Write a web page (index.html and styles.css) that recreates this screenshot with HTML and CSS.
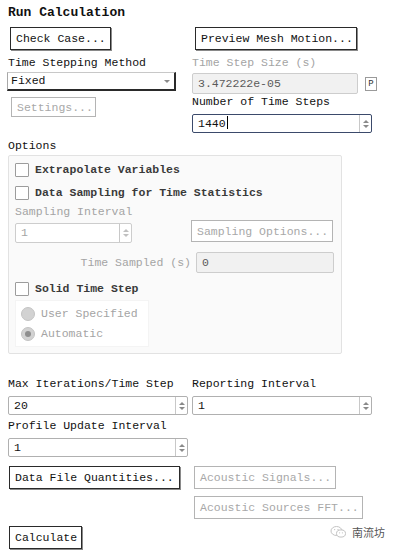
FILE: index.html
```html
<!DOCTYPE html>
<html lang="en">
<head>
    <meta charset="UTF-8">
    <meta name="viewport" content="width=device-width, initial-scale=1.0">
    <title>Run Calculation</title>
    <link rel="stylesheet" href="styles.css">
</head>
<body>
    <div class="panel">
        <h1 class="title">Run Calculation</h1>

        <div class="top">
            <div class="col">
                <button type="button" class="btn btn-check">Check Case...</button>
                <label class="lbl">Time Stepping Method</label>
                <div class="select">
                    <span>Fixed</span>
                    <span class="select-arrow"></span>
                </div>
                <button type="button" class="btn btn-off btn-settings">Settings...</button>
            </div>
            <div class="col">
                <button type="button" class="btn btn-preview">Preview Mesh Motion...</button>
                <label class="lbl lbl-off">Time Step Size (s)</label>
                <div class="step-row">
                    <div class="field field-off field-step">3.472222e-05</div>
                    <span class="p-btn">P</span>
                </div>
                <label class="lbl lbl-steps">Number of Time Steps</label>
                <div class="field field-focus field-count">
                    <span>1440<span class="caret"></span></span>
                    <span class="spin"><i class="up"></i><i class="down"></i></span>
                </div>
            </div>
        </div>

        <div class="lbl lbl-options">Options</div>
        <div class="options">
            <div class="check-row"><span class="check"></span>Extrapolate Variables</div>
            <div class="check-row"><span class="check"></span>Data Sampling for Time Statistics</div>
            <div class="lbl lbl-off">Sampling Interval</div>
            <div class="sampling-row">
                <div class="field field-off field-interval">
                    <span>1</span>
                    <span class="spin"><i class="up"></i><i class="down"></i></span>
                </div>
                <button type="button" class="btn btn-off btn-sampling">Sampling Options...</button>
            </div>
            <div class="sampled-row">
                <span class="lbl-off sampled-label">Time Sampled (s)</span>
                <div class="field field-off field-sampled">0</div>
            </div>
            <div class="check-row check-solid"><span class="check"></span>Solid Time Step</div>
            <div class="radio-box">
                <div class="radio-row"><span class="radio"></span>User Specified</div>
                <div class="radio-row"><span class="radio radio-on"></span>Automatic</div>
            </div>
        </div>

        <div class="bottom">
            <label class="lbl">Max Iterations/Time Step</label>
            <label class="lbl">Reporting Interval</label>
            <div class="field field-num">
                <span>20</span>
                <span class="spin"><i class="up"></i><i class="down"></i></span>
            </div>
            <div class="field field-num">
                <span>1</span>
                <span class="spin"><i class="up"></i><i class="down"></i></span>
            </div>
            <label class="lbl lbl-profile">Profile Update Interval</label>
            <div></div>
            <div class="field field-num field-profile">
                <span>1</span>
                <span class="spin"><i class="up"></i><i class="down"></i></span>
            </div>
        </div>

        <div class="actions">
            <div class="col">
                <button type="button" class="btn btn-data">Data File Quantities...</button>
            </div>
            <div class="col">
                <button type="button" class="btn btn-off btn-signals">Acoustic Signals...</button>
                <button type="button" class="btn btn-off btn-fft">Acoustic Sources FFT...</button>
            </div>
        </div>

        <button type="button" class="btn btn-calc">Calculate</button>
    </div>

    <div class="watermark">
        <svg width="17" height="14" viewBox="0 0 17 14">
            <ellipse cx="6.5" cy="6" rx="5.5" ry="4.5" fill="none" stroke="#c4c4c4" stroke-width="1"/>
            <ellipse cx="11" cy="8.5" rx="4.5" ry="3.6" fill="#fff" stroke="#c4c4c4" stroke-width="1"/>
            <circle cx="4.6" cy="4.6" r="0.7" fill="#c4c4c4"/>
            <circle cx="8" cy="4.6" r="0.7" fill="#c4c4c4"/>
            <circle cx="9.6" cy="7.8" r="0.6" fill="#c4c4c4"/>
            <circle cx="12.4" cy="7.8" r="0.6" fill="#c4c4c4"/>
        </svg>
        <span>南流坊</span>
    </div>
</body>
</html>
```

FILE: styles.css
```css
body {
    margin: 0;
    background-color: #ffffff;
    color: #111111;
    font-family: "Liberation Mono", "DejaVu Sans Mono", monospace;
    font-size: 11.5px;
    line-height: 14px;
}
button {
    font-family: "Liberation Mono", "DejaVu Sans Mono", monospace;
    font-size: 11.5px;
}
.panel {
    position: relative;
    width: 377px;
    height: 552px;
    padding: 5px 0 0 8px;
    box-sizing: border-box;
}
.title {
    margin: 0;
    font-size: 13px;
    line-height: 15px;
    font-weight: bold;
}

/* buttons */
.btn {
    display: block;
    height: 23px;
    padding: 0 5px;
    background-color: #ffffff;
    color: #111111;
    border: 1px solid #2a2a2a;
    box-shadow: 1px 1px 0 #8a8a8a;
    text-align: left;
    white-space: nowrap;
}
.btn-off {
    color: #a8a8a8;
    border-color: #b4b4b4;
    box-shadow: none;
}
.btn-check {
    width: 101px;
    margin-left: 2px;
}
.btn-preview {
    width: 162px;
    margin-left: 3px;
}
.btn-settings {
    width: 85px;
    height: 20px;
    margin: 6px 0 0 3px;
}

/* labels */
.lbl {
    display: block;
    margin-top: 6px;
}
.lbl-off {
    color: #a4a4a4;
}

.top {
    display: grid;
    grid-template-columns: 184px 186px;
    margin-top: 7px;
}
.col {
    display: flex;
    flex-direction: column;
    align-items: flex-start;
}

/* dropdown */
.select {
    display: flex;
    justify-content: space-between;
    align-items: center;
    width: 169px;
    height: 19px;
    margin: 2px 0 0 -1px;
    padding: 0 4px 0 3px;
    box-sizing: border-box;
    border-top: 1px solid #c8c8c8;
    border-left: 1px solid #a8a8a8;
    border-right: 2px solid #2a2a2a;
    border-bottom: 2px solid #2a2a2a;
}
.select-arrow {
    width: 0;
    height: 0;
    border-left: 3px solid transparent;
    border-right: 3px solid transparent;
    border-top: 3px solid #8a8a8a;
}

/* text fields */
.field {
    display: flex;
    justify-content: space-between;
    align-items: center;
    height: 19px;
    padding-left: 5px;
    box-sizing: border-box;
    background-color: #ffffff;
    border: 1px solid #b0b0b0;
    border-radius: 2px;
}
.field-off {
    background-color: #f1f1f1;
    color: #5a5a5a;
    border-color: #cdcdcd;
}
.field-focus {
    border-color: #3b4a6b;
}
.step-row {
    display: flex;
    align-items: center;
    margin-top: 3px;
}
.field-step {
    width: 166px;
    height: 21px;
}
.p-btn {
    width: 10px;
    height: 12px;
    margin-left: 7px;
    border: 1px solid #9a9a9a;
    font-size: 9px;
    line-height: 12px;
    text-align: center;
    color: #333333;
}
.lbl-steps {
    margin-top: 1px;
}
.field-count {
    width: 180px;
    margin-top: 5px;
}
.caret {
    display: inline-block;
    width: 1px;
    height: 13px;
    margin-left: 1px;
    vertical-align: -2px;
    background-color: #000000;
}

/* spinner */
.spin {
    display: flex;
    flex-direction: column;
    justify-content: center;
    align-items: center;
    gap: 2px;
    width: 11px;
    height: 100%;
    border-left: 1px solid #c8c8c8;
}
.spin i {
    width: 0;
    height: 0;
    border-left: 3px solid transparent;
    border-right: 3px solid transparent;
}
.spin .up {
    border-bottom: 3px solid #8a8a8a;
}
.spin .down {
    border-top: 3px solid #8a8a8a;
}

/* options group */
.lbl-options {
    margin-top: 6px;
}
.options {
    width: 334px;
    height: 199px;
    margin: 2px 0 0 0;
    padding: 2px 0 0 6px;
    box-sizing: border-box;
    background-color: #fafafa;
    border: 1px solid #e2e2e2;
    border-radius: 2px;
}
.options .lbl {
    margin-top: 1px;
}
.check-row {
    display: flex;
    align-items: center;
    height: 23px;
    font-weight: bold;
    color: #3a3a3a;
}
.check {
    width: 12px;
    height: 12px;
    margin-right: 6px;
    background-color: #ffffff;
    border: 1px solid #9c9c9c;
    border-radius: 1px;
}
.sampling-row {
    display: flex;
    align-items: flex-start;
}
.field-interval {
    width: 117px;
    height: 20px;
    margin-top: 4px;
    color: #a4a4a4;
    background-color: #ffffff;
}
.field-interval .spin i {
    border-top-color: #c0c0c0;
    border-bottom-color: #c0c0c0;
}
.btn-sampling {
    width: 142px;
    height: 22px;
    margin: 1px 0 0 59px;
}
.sampled-row {
    display: flex;
    align-items: center;
    margin-top: 9px;
}
.sampled-label {
    width: 176px;
    text-align: right;
}
.field-sampled {
    width: 138px;
    height: 21px;
    margin-left: 5px;
}
.check-solid {
    margin-top: 4px;
}
.radio-box {
    width: 134px;
    height: 47px;
    padding-top: 3px;
    box-sizing: border-box;
    background-color: #ffffff;
    border: 1px solid #f4f4f4;
    color: #a4a4a4;
}
.radio-row {
    display: flex;
    align-items: center;
    height: 20px;
    padding-left: 5px;
}
.radio {
    display: flex;
    justify-content: center;
    align-items: center;
    width: 12px;
    height: 12px;
    margin-right: 6px;
    background-color: #d2d2d2;
    border: 1px solid #c4c4c4;
    border-radius: 50%;
}
.radio-on::after {
    content: "";
    width: 6px;
    height: 6px;
    border-radius: 50%;
    background-color: #8e8e8e;
}

/* iterations */
.bottom {
    display: grid;
    grid-template-columns: 180px 180px;
    column-gap: 4px;
    margin-top: 23px;
}
.bottom .lbl {
    margin-top: 0;
}
.field-num {
    height: 19px;
    margin-top: 5px;
}
.bottom .lbl-profile {
    margin-top: 4px;
}
.field-profile {
    margin-top: 5px;
}

/* action buttons */
.actions {
    display: grid;
    grid-template-columns: 186px 186px;
    margin-top: 9px;
}
.btn-data {
    width: 171px;
    margin-left: 1px;
}
.btn-signals {
    width: 142px;
}
.btn-fft {
    width: 169px;
    margin-top: 7px;
}
.btn-calc {
    margin: 7px 0 0 1px;
    width: 73px;
}

.watermark {
    position: absolute;
    right: 8px;
    bottom: 13px;
    display: flex;
    align-items: center;
    gap: 5px;
    color: #555555;
    font-family: "Noto Sans CJK SC", sans-serif;
    font-size: 11px;
}
```
